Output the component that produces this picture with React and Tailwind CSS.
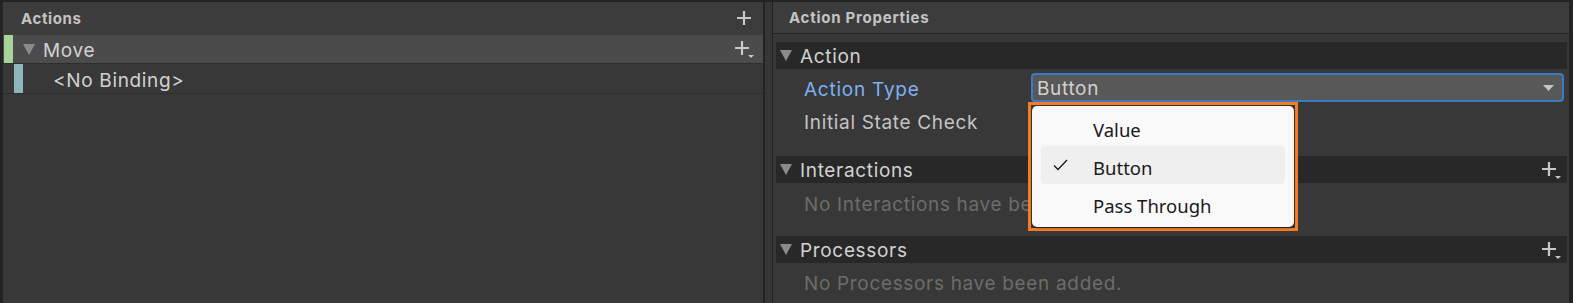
import React from "react";

const PlusIcon = ({ drop }) => (
  <svg width="20" height="18" viewBox="0 0 20 18" className="shrink-0">
    <path d="M8 1v14M1 8h14" stroke="#c8c8c8" strokeWidth="2.2" />
    {drop && <path d="M14 15h6l-3 3z" fill="#c8c8c8" />}
  </svg>
);

const Tri = () => (
  <svg width="12" height="11" viewBox="0 0 12 11" className="shrink-0">
    <path d="M0 0h12L6 11z" fill="#8b8b8b" />
  </svg>
);

function SectionHeader({ title, plus }) {
  return (
    <div className="h-[27px] bg-[#282828] flex items-center pl-[4px] pr-[6px]">
      <Tri />
      <span className="ml-[8px] pt-[4px] text-[19px] text-[#d2d2d2] tracking-[0.035em] flex-1">{title}</span>
      {plus && <PlusIcon drop />}
    </div>
  );
}

export default function App() {
  return (
    <div
      className="w-[1573px] h-[303px] bg-[#232323] flex pt-[2px] pl-[3px] overflow-hidden"
      style={{ fontFamily: "Inter, 'Noto Sans', sans-serif" }}
    >
      {/* ── Actions panel ── */}
      <div className="w-[760px] bg-[#383838] flex flex-col">
        <div className="h-[33px] bg-[#3c3c3c] flex items-center pl-[18px] pr-[7px]">
          <span className="flex-1 pt-[2px] text-[15px] font-bold text-[#c4c4c4] tracking-[0.04em]">Actions</span>
          <PlusIcon />
        </div>
        <div className="h-[29px] bg-[#4b4b4b] border-b border-[#2e2e2e] flex items-center pr-[9px]">
          <div className="w-[9px] h-full bg-[#a8d49a] ml-[1px]" />
          <div className="ml-[10px]"><Tri /></div>
          <span className="ml-[8px] pt-[5px] text-[19px] text-[#d2d2d2] flex-1 tracking-[0.035em]">Move</span>
          <PlusIcon drop />
        </div>
        <div className="h-[30px] border-b border-[#2e2e2e] flex items-center">
          <div className="w-[9px] h-full bg-[#8fb6bc] ml-[11px]" />
          <span className="ml-[30px] pt-[5px] text-[19px] text-[#d2d2d2] tracking-[0.035em]">&lt;No Binding&gt;</span>
        </div>
      </div>

      <div className="w-[2px]" />
      <div className="w-[7px] bg-[#363636]" />
      <div className="w-[1px]" />

      {/* ── Properties panel ── */}
      <div className="w-[796px] bg-[#383838] flex flex-col relative">
        <div className="h-[32px] bg-[#3c3c3c] border-b border-[#232323] flex items-center pl-[16px]">
          <span className="pt-[2px] text-[15px] font-bold text-[#c4c4c4] tracking-[0.05em]">Action Properties</span>
        </div>
        <div className="pl-[3px] pr-[2px] pt-[8px] flex flex-col">
          <SectionHeader title="Action" />
          <div className="h-[29px] mt-[4px] flex items-center">
            <span className="ml-[28px] pt-[5px] w-[227px] text-[19px] text-[#7eb0f5] tracking-[0.04em]">Action Type</span>
            <div className="w-[533px] h-full bg-[#585858] border-2 border-[#3b7bc4] rounded-[4px] flex items-center pl-[4px] pr-[8px]">
              <span className="flex-1 pt-[4px] text-[19px] text-[#d2d2d2] tracking-[0.035em]">Button</span>
              <svg width="11" height="6" viewBox="0 0 11 6"><path d="M0 0h11L5.5 6z" fill="#c4c4c4" /></svg>
            </div>
          </div>
          <div className="h-[33px] mt-[2px] flex items-center">
            <span className="ml-[28px] pt-[5px] text-[19px] text-[#c4c4c4] tracking-[0.035em]">Initial State Check</span>
          </div>
          <div className="mt-[19px]">
            <SectionHeader title="Interactions" plus />
          </div>
          <div className="h-[40px] flex items-center">
            <span className="ml-[28px] pt-[4px] text-[19px] text-[#6c6c6c] tracking-[0.035em]">No Interactions have been added.</span>
          </div>
          <div className="mt-[13px]">
            <SectionHeader title="Processors" plus />
          </div>
          <div className="h-[38px] flex items-center">
            <span className="ml-[28px] pt-[4px] text-[19px] text-[#6c6c6c] tracking-[0.035em]">No Processors have been added.</span>
          </div>
        </div>

        {/* ── Dropdown menu ── */}
        <div className="absolute left-[255px] top-[100px] w-[270px] h-[129px] border-[3px] border-[#f57c22] bg-[#383838] p-px">
          <div
            className="w-full h-full bg-[#f9f9f9] rounded-[5px] shadow-[0_1px_2px_rgba(0,0,0,0.5)] flex flex-col pt-[2px] px-[9px]"
            style={{ fontFamily: "'Noto Sans', 'Open Sans', sans-serif" }}
          >
            {["Value", "Button", "Pass Through"].map((t) => (
              <div
                key={t}
                className={`h-[38px] flex items-center rounded-[4px] ${t === "Button" ? "bg-[#efefef]" : ""}`}
              >
                <div className="w-[52px] flex justify-start pl-[12px]">
                  {t === "Button" && (
                    <svg width="15" height="12" viewBox="0 0 15 12">
                      <path d="M1 6.5l4 4L14 1" stroke="#1a1a1a" strokeWidth="1.3" fill="none" />
                    </svg>
                  )}
                </div>
                <span className="pt-[5px] text-[18.5px] text-[#1a1a1a]">{t}</span>
              </div>
            ))}
          </div>
        </div>
      </div>
    </div>
  );
}
